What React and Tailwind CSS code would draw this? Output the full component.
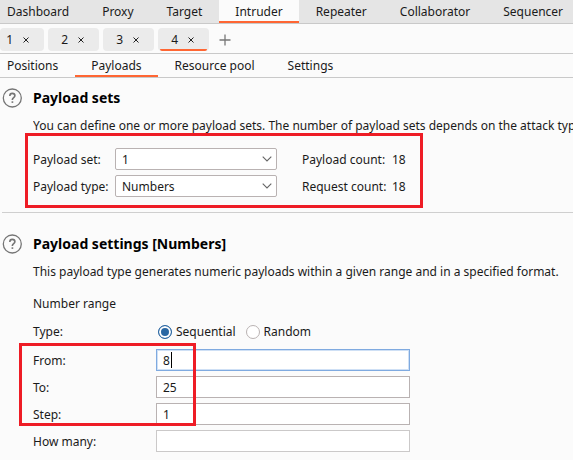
import { useState } from "react";

const mainTabs = ["Dashboard", "Proxy", "Target", "Intruder", "Repeater", "Collaborator", "Sequencer"];
const attackTabs = ["1", "2", "3", "4"];
const subTabs = ["Positions", "Payloads", "Resource pool", "Settings"];

function HelpButton() {
  return (
    <button type="button" aria-label="Help" className="mt-px h-5 w-5 shrink-0">
      <svg viewBox="0 0 20 20" className="block h-5 w-5" fill="none" stroke="#757575">
        <circle cx="10.3" cy="10" r="9" strokeWidth="1.3" />
        <path d="M7.8 8C7.8 6.3 8.8 5.4 10.3 5.4s2.6.9 2.6 2.3c0 1.8-2.5 2-2.5 3.9v.3" strokeWidth="1.6" />
        <path d="M10.4 13.3v1.6" strokeWidth="1.7" />
      </svg>
    </button>
  );
}

function MainTabs() {
  return (
    <nav className="flex h-6 gap-px overflow-hidden border-b border-[#c9c9c9] bg-[#e5e5e5] whitespace-nowrap">
      {mainTabs.map((tab) => (
        <button
          key={tab}
          type="button"
          className={
            tab === "Intruder"
              ? "shrink-0 border-b-2 border-[#ff6633] bg-[#fbfbfb] px-4 pt-[2px]"
              : "shrink-0 border-b-2 border-transparent px-4 pt-[2px] first:pl-[7px]"
          }
        >
          {tab}
        </button>
      ))}
    </nav>
  );
}

function AttackTabs() {
  return (
    <nav className="flex h-[30px] gap-1 border-b border-[#c9c9c9] pt-1 pb-[2px]">
      {attackTabs.map((tab) => (
        <div
          key={tab}
          className="relative flex w-[51px] shrink-0 items-center justify-end gap-[9px] rounded-[4px] bg-[#ebebeb] pr-[14px] first:w-11"
        >
          <button type="button">{tab}</button>
          <button type="button" aria-label={"Close tab " + tab}>
            <svg viewBox="0 0 8 8" className="block h-2 w-2" stroke="#222">
              <path d="M1.5 1.5l5 5M6.5 1.5l-5 5" />
            </svg>
          </button>
          {tab === "4" && <span className="absolute inset-x-[2px] bottom-0 h-[2px] rounded-b bg-[#ff6633]" />}
        </div>
      ))}
      <button type="button" aria-label="New tab" className="ml-[6px]">
        <svg viewBox="0 0 12 12" className="block h-3 w-3" stroke="#777" strokeWidth="1.3">
          <path d="M6 .5v11M.5 6h11" />
        </svg>
      </button>
    </nav>
  );
}

function SubTabs() {
  return (
    <nav className="flex h-6 gap-px border-b border-[#c9c9c9] whitespace-nowrap">
      {subTabs.map((tab) => (
        <button
          key={tab}
          type="button"
          className={
            tab === "Payloads"
              ? "border-b-2 border-[#ff6633] px-4 pt-[2px]"
              : "border-b-2 border-transparent px-4 pt-[2px] first:pl-[7px]"
          }
        >
          {tab}
        </button>
      ))}
    </nav>
  );
}

function SelectRow({ id, label, options, countLabel }) {
  return (
    <div className="flex h-[22px] items-center whitespace-nowrap">
      <label htmlFor={id} className="w-[82px] shrink-0 pt-[2px]">{label}</label>
      <div className="relative w-[162px] shrink-0">
        <select
          id={id}
          className="block h-[22px] w-full appearance-none rounded-[2px] border border-[#b9b2b2] bg-white pt-px pl-[6px] leading-5 outline-none"
        >
          {options.map((option) => <option key={option}>{option}</option>)}
        </select>
        <svg viewBox="0 0 10 6" className="pointer-events-none absolute top-2 right-[5px] h-[6px] w-[10px]" fill="none" stroke="#666" strokeWidth="1.1">
          <path d="M.7.7L5 5 9.3.7" />
        </svg>
      </div>
      <span className="ml-[25px] w-[90px] shrink-0 pt-[2px]">{countLabel}</span>
      <span className="pt-[2px]">18</span>
    </div>
  );
}

function RangeRow({ id, label, value, onChange, variant }) {
  const styles = {
    focused: "border-[#7faae0] shadow-[inset_0_0_0_1px_#cfe0f5]",
    normal: "border-[#b9b2b2]",
    disabled: "border-[#cbc9c9]",
  };
  return (
    <div className="flex h-[22px] items-center">
      <label htmlFor={id} className="w-[123px] shrink-0 pt-[2px]">{label}</label>
      <div className="relative w-[254px] shrink-0">
        <input
          id={id}
          type="text"
          value={value}
          onChange={(event) => onChange(event.target.value)}
          disabled={variant === "disabled"}
          className={"block h-[22px] w-full border bg-white px-[6px] leading-5 caret-transparent outline-none " + styles[variant]}
        />
        {variant === "focused" && <span className="pointer-events-none absolute top-[3px] left-[15px] h-4 w-px bg-black" />}
      </div>
    </div>
  );
}

function TypeOption({ label, checked, onChange }) {
  return (
    <label className="flex items-center gap-1">
      <input
        type="radio"
        name="type"
        checked={checked}
        onChange={onChange}
        className="h-[14px] w-[14px] appearance-none rounded-full border border-[#b9b2b2] bg-white checked:border-[#2a67a3] checked:bg-[#2a67a3] checked:shadow-[inset_0_0_0_2px_white]"
      />
      {label}
    </label>
  );
}

export default function App() {
  const [type, setType] = useState("Sequential");
  const [range, setRange] = useState({ from: "8", to: "25", step: "1", many: "" });
  const update = (key) => (value) => setRange({ ...range, [key]: value });

  return (
    <div className="min-h-screen overflow-hidden bg-[#fbfbfb] font-['Noto_Sans',sans-serif] text-xs leading-5 text-[#1a1a1a]">
      <MainTabs />
      <AttackTabs />
      <SubTabs />
      <main className="pl-[2px]">
        <section className="relative flex gap-[11px] border-b border-[#cfcfcf] pt-[9px] pb-[15px]">
          <HelpButton />
          <div className="min-w-0 flex-1 pt-px">
            <h2 className="text-sm leading-5 font-bold text-black">Payload sets</h2>
            <p className="mt-2 overflow-hidden whitespace-nowrap">
              You can define one or more payload sets. The number of payload sets depends on the attack type
            </p>
            <div className="mt-3 flex flex-col gap-[5px]">
              <SelectRow id="payload-set" label="Payload set:" options={["1"]} countLabel="Payload count:" />
              <SelectRow id="payload-type" label="Payload type:" options={["Numbers"]} countLabel="Request count:" />
            </div>
          </div>
          <div className="pointer-events-none absolute bottom-1 left-[23px] h-[75px] w-[398px] border-3 border-[#ee1c25]" />
        </section>
        <section className="flex gap-[11px] pt-5">
          <HelpButton />
          <div className="min-w-0 flex-1 pt-px">
            <h2 className="text-sm leading-5 font-bold text-black">Payload settings [Numbers]</h2>
            <p className="mt-2 whitespace-nowrap">
              This payload type generates numeric payloads within a given range and in a specified format.
            </p>
            <h3 className="mt-3">Number range</h3>
            <fieldset className="mt-2 flex">
              <legend className="float-left w-[125px]">Type:</legend>
              <div className="flex gap-[10px]">
                {["Sequential", "Random"].map((name) => (
                  <TypeOption key={name} label={name} checked={type === name} onChange={() => setType(name)} />
                ))}
              </div>
            </fieldset>
            <div className="relative mt-[7px] flex flex-col gap-[5px]">
              <RangeRow id="from" label="From:" value={range.from} onChange={update("from")} variant="focused" />
              <RangeRow id="to" label="To:" value={range.to} onChange={update("to")} variant="normal" />
              <RangeRow id="step" label="Step:" value={range.step} onChange={update("step")} variant="normal" />
              <RangeRow id="many" label="How many:" value={range.many} onChange={update("many")} variant="disabled" />
              <div className="pointer-events-none absolute -top-[6px] -left-[14px] h-[83px] w-[177px] border-3 border-[#ee1c25]" />
            </div>
          </div>
        </section>
      </main>
    </div>
  );
}
